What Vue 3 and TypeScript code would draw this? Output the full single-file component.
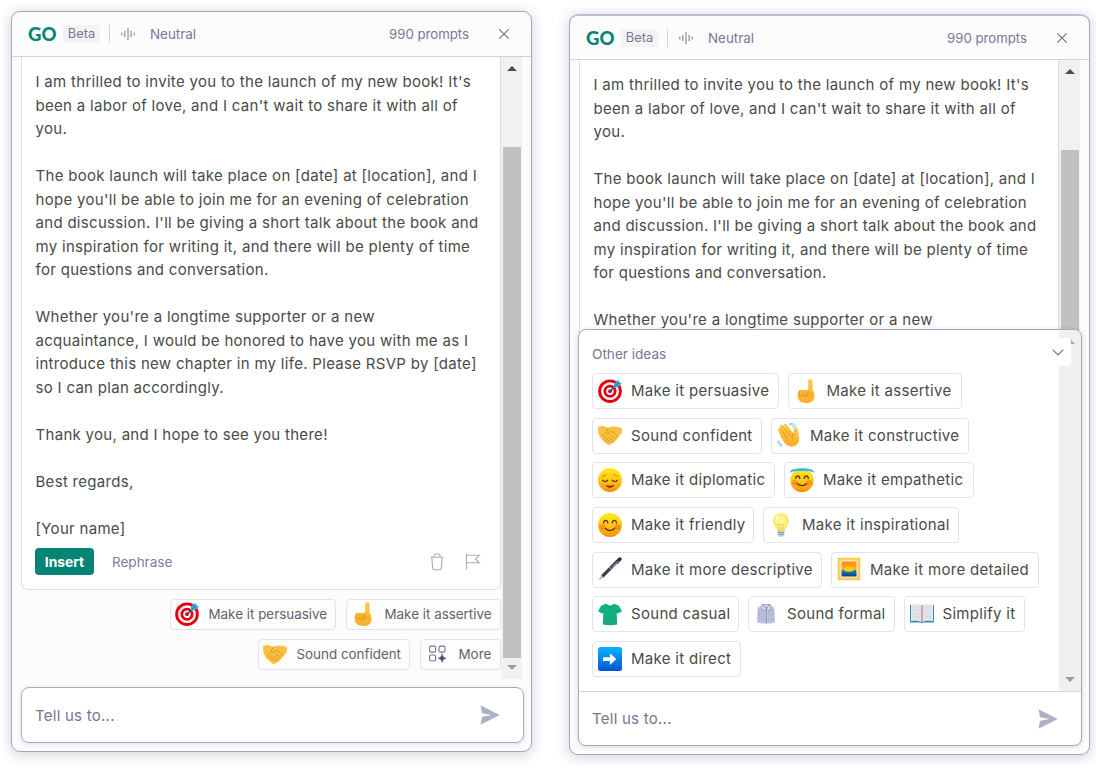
<script setup lang="ts">
interface Chip {
  icon: string
  label: string
  width: number
}

interface Panel {
  id: string
  ideasOpen: boolean
  lineCount: number
}

const panels: Panel[] = [
  { id: 'compose', ideasOpen: false, lineCount: 20 },
  { id: 'ideas', ideasOpen: true, lineCount: 11 },
]

const lines: string[] = [
  "I am thrilled to invite you to the launch of my new book! It's",
  "been a labor of love, and I can't wait to share it with all of",
  'you.',
  '',
  'The book launch will take place on [date] at [location], and I',
  "hope you'll be able to join me for an evening of celebration",
  "and discussion. I'll be giving a short talk about the book and",
  'my inspiration for writing it, and there will be plenty of time',
  'for questions and conversation.',
  '',
  "Whether you're a longtime supporter or a new",
  'acquaintance, I would be honored to have you with me as I',
  'introduce this new chapter in my life. Please RSVP by [date]',
  'so I can plan accordingly.',
  '',
  'Thank you, and I hope to see you there!',
  '',
  'Best regards,',
  '',
  '[Your name]',
]

const quickRows: Chip[][] = [
  [
    { icon: 'target', label: 'Make it persuasive', width: 166 },
    { icon: 'finger', label: 'Make it assertive', width: 155 },
  ],
  [
    { icon: 'handshake', label: 'Sound confident', width: 152 },
    { icon: 'more', label: 'More', width: 81 },
  ],
]

const ideaRows: Chip[][] = [
  [
    { icon: 'target', label: 'Make it persuasive', width: 186.5 },
    { icon: 'finger', label: 'Make it assertive', width: 174 },
  ],
  [
    { icon: 'handshake', label: 'Sound confident', width: 170 },
    { icon: 'wave', label: 'Make it constructive', width: 198 },
  ],
  [
    { icon: 'relieved', label: 'Make it diplomatic', width: 183 },
    { icon: 'halo', label: 'Make it empathetic', width: 190 },
  ],
  [
    { icon: 'smile', label: 'Make it friendly', width: 162 },
    { icon: 'bulb', label: 'Make it inspirational', width: 195.5 },
  ],
  [
    { icon: 'pen', label: 'Make it more descriptive', width: 230 },
    { icon: 'picture', label: 'Make it more detailed', width: 207.5 },
  ],
  [
    { icon: 'tshirt', label: 'Sound casual', width: 147 },
    { icon: 'shirt', label: 'Sound formal', width: 146.5 },
    { icon: 'book', label: 'Simplify it', width: 121 },
  ],
  [{ icon: 'arrow', label: 'Make it direct', width: 149 }],
]
</script>

<template>
  <main class="stage">
    <svg class="defs" width="0" height="0" aria-hidden="true">
      <defs>
        <linearGradient id="gFace" x1="0" y1="0" x2="0" y2="1">
          <stop offset="0" stop-color="#ffe91f" />
          <stop offset=".5" stop-color="#ffc914" />
          <stop offset="1" stop-color="#fb8a0a" />
        </linearGradient>
        <linearGradient id="gBlue" x1="0" y1="0" x2="0" y2="1">
          <stop offset="0" stop-color="#05b4fb" />
          <stop offset="1" stop-color="#0554cf" />
        </linearGradient>
        <linearGradient id="gSky" x1="0" y1="0" x2="0" y2="1">
          <stop offset="0" stop-color="#fb8a0c" />
          <stop offset=".58" stop-color="#fdb515" />
          <stop offset=".6" stop-color="#1488c4" />
          <stop offset="1" stop-color="#0a3b78" />
        </linearGradient>
        <linearGradient id="gHand" x1="0" y1="0" x2="0" y2="1">
          <stop offset="0" stop-color="#ffcb4c" />
          <stop offset="1" stop-color="#f7ae28" />
        </linearGradient>
        <linearGradient id="gTee" x1="0" y1="0" x2="0" y2="1">
          <stop offset="0" stop-color="#11b488" />
          <stop offset="1" stop-color="#16a77b" />
        </linearGradient>
        <radialGradient id="gBulb" cx=".5" cy=".45" r=".6">
          <stop offset="0" stop-color="#fff9a8" />
          <stop offset="1" stop-color="#fbe158" />
        </radialGradient>
      </defs>

      <symbol id="target" viewBox="0 0 24 24">
        <circle cx="12" cy="12.2" r="11.8" fill="#e60012" />
        <circle cx="12" cy="12.2" r="8.900" fill="#fff" />
        <circle cx="12" cy="12.2" r="6.500" fill="#e60012" />
        <circle cx="12" cy="12.2" r="3.700" fill="#fff" />
        <circle cx="12" cy="12.2" r="1.900" fill="#e60012" />
        <path d="M12 12.4 18 6.3" stroke="#1b5e8c" stroke-width="1.5" />
        <path d="M15.6 8.4 16 4.8 20.2.4 20.8 3.4 24 4.2 19.8 8.2 16.2 8.6Z" fill="#35a9e0" />
        <path d="M16.6 7.8 22 2.6" stroke="#1a6fa8" stroke-width=".9" />
      </symbol>

      <symbol id="finger" viewBox="-3 0 24 24">
        <path d="M11.2 12.2V2.1c0-2.5 4.4-2.5 4.4 0v9.2c1.6 1 1.9 3.2 1.9 5.6 0 4.400-3.200 7-8 7C4 23.900.6 21.300.6 16.700c0-2.600.2-4.900 2-5.300 1-.9 2.500-.9 3.500 0 1.300-1 3.400-.800 5.100.800Z" fill="url(#gHand)" />
        <path d="M2.600 11.600v4.200c.5 1.600 2.900 1.500 3.300 0v-4.200M6 15.500c.8 1.500 3.200 1.200 3.600-.3l.2-3.400M1.500 15.600c4 2.400 8.900 2 13-1.200M11.200 11v3.500c-2.200 1-3.600 2.200-3.200 4.600" fill="none" stroke="#e29a26" stroke-width=".9" stroke-linecap="round" />
      </symbol>

      <symbol id="handshake" viewBox="0 0 24 24">
        <path d="M.5 4.300 5 3.500l5.300 1.800 3.200-1.200 5.200.2 4.800 1-.4 5.300-2.600 2.300-2 3.300-1.700 1.300-1.200 1.900-2 .6-1.900 1.700-2.300-.6-3-2.700-2.300-2-1.500-2.500L1 11.100Z" fill="#fabf3f" stroke="#fabf3f" stroke-linejoin="round" />
        <path d="m10.200 5.300-2.400 4.400c1.500 1.500 3.500.7 4.500-1.200l2.200.1 5.300 4.800M13 12.200l4.200 3.500M10.900 14.300l4.100 3.400M9 16.200l3.300 3M4.700 12.900l1.900-1.600M6 15.600l2-1.800M8.100 17.800l1.400-1.600" fill="none" stroke="#d38e22" stroke-width=".8" stroke-linecap="round" />
      </symbol>

      <symbol id="wave" viewBox="0 0 24 24">
        <path d="M4 14.200 1 7.300C.3 5.200 2.800 4 4 5.900l2.500 4L2.900 4.100C2 2 4.500.9 5.800 2.600l4 6L6.900 2.700C6.200.6 8.700-.1 9.800 1.600l6.500 8.600.5-3.200c-.1-2.700 3.300-2.900 3.900-.5l1.400 8.200c.6 3.600-1.400 7.300-4.800 8.500-3.800 1.300-7.600-.2-10-3.600Z" fill="url(#gHand)" />
        <path d="m4 6 6 9M5.900 3l7.100 9.700M16.300 10.200c-1.500 1.800-1.600 4.200-.5 6" fill="none" stroke="#d9901c" stroke-width=".9" stroke-linecap="round" />
        <path d="M12.600 1.300c2.200.4 3.700 1.500 4.500 3.500M13.500.1c2.700.2 4.500 1.600 5.500 4M.5 18.700c.6 2.200 1.900 3.600 4 4.300M1.900 18.200c.4 1.600 1.300 2.700 2.800 3.300" fill="none" stroke="#5abce0" stroke-width=".9" stroke-linecap="round" />
      </symbol>

      <symbol id="relieved" viewBox="0 0 24 24">
        <circle cx="12" cy="12" r="12" fill="url(#gFace)" />
        <path d="M4.600 12.200c1.200 1.700 4.100 1.700 5.200 0M14.200 12.200c1.200 1.700 4.100 1.700 5.200 0" fill="none" stroke="#5a3305" stroke-width="1.200" stroke-linecap="round" />
        <path d="M7.700 17c2 1 6.600 1 8.600 0-1.200 3.700-7.400 3.700-8.600 0Z" fill="#5a3305" />
        <path d="M4.400 8.200c1.700-.1 3.200-.9 4.200-2.100M19.600 8.200c-1.700-.1-3.200-.9-4.200-2.100" fill="none" stroke="#b7740c" stroke-width=".9" stroke-linecap="round" />
      </symbol>

      <symbol id="smile" viewBox="0 0 24 24">
        <circle cx="12" cy="12" r="12" fill="url(#gFace)" />
        <circle cx="4.200" cy="14" r="3" fill="#f76a2a" opacity=".55" />
        <circle cx="19.800" cy="14" r="3" fill="#f76a2a" opacity=".55" />
        <path d="M5.500 9.800c.6-3.300 3.800-3.300 4.300 0M14.200 9.800c.6-3.300 3.800-3.300 4.300 0M7.200 15.200c2.200 3.100 7.400 3.100 9.600 0" fill="none" stroke="#5a3305" stroke-width="1.300" stroke-linecap="round" />
      </symbol>

      <symbol id="halo" viewBox="0 0 24 24">
        <circle cx="12" cy="12.600" r="11.700" fill="url(#gFace)" />
        <circle cx="4.600" cy="14.500" r="2.800" fill="#f76a2a" opacity=".5" />
        <circle cx="19.400" cy="14.500" r="2.800" fill="#f76a2a" opacity=".5" />
        <path d="M5.600 10.400c.6-3.200 3.700-3.200 4.200 0M14.200 10.400c.6-3.200 3.700-3.200 4.200 0M7.200 15.400c2.200 3 7.400 3 9.600 0" fill="none" stroke="#5a3305" stroke-width="1.300" stroke-linecap="round" />
        <path d="M.5 4.200C-.5-.4 24.500-.4 23.500 4.200 21.500 1.700 2.500 1.700.5 4.200Z" fill="#24b5e8" stroke="#24b5e8" stroke-width=".8" stroke-linejoin="round" />
      </symbol>

      <symbol id="bulb" viewBox="-4 0 24 24">
        <path d="M8 .2c4.700 0 7.900 3.400 7.900 7.500 0 4.300-3.600 6.300-4.200 10.200H4.300C3.700 14 .1 12 .1 7.700.1 3.600 3.300.2 8 .2Z" fill="url(#gBulb)" />
        <path d="M6.700 17.500 5.400 11.100l1.600.8 1-.8 1 .8 1.600-.8-1.300 6.400" fill="none" stroke="#efc545" stroke-width=".7" />
        <path d="M4.600 17.700h6.800v3.700l-1.700 2.300H6.300l-1.700-2.300Z" fill="#bfcbd0" />
        <path d="M4.700 19.500h6.600M5 21.500h6" stroke="#82959d" stroke-width=".8" />
        <path d="M3 7.300c.2-2.200 1.200-3.700 3-4.400" stroke="#fffde0" stroke-width="1.300" fill="none" stroke-linecap="round" />
      </symbol>

      <symbol id="pen" viewBox="0 0 24 24">
        <path d="M.2 23.800 3.500 17.900l2.600 2.600Z" fill="#b8bdc4" />
        <path d="M3.300 18.100 16.500 4.700l2.400 2.400L5.600 20.400Z" fill="#3b4250" />
        <path d="M16.500 4.700 20.900.5c1.800-1.200 3.600.9 2.600 2.400l-4.200 4.300Z" fill="#2c323e" />
        <path d="m11 10.100 2.600 2.600M20.500 4 14 10.500" stroke="#cfd4da" stroke-width=".9" />
      </symbol>

      <symbol id="picture" viewBox="0 0 24 24">
        <path d="M.8.8h22.400v22.400H.8Z" fill="#f8bd3d" />
        <path d="M2.200 2.200h19.600v19.600H2.200Z" fill="none" stroke="#ffdc70" />
        <path d="M3.400 3.400h17.200v17.200H3.400Z" fill="#fff8e7" />
        <path d="M4.500 4.500h15v15h-15Z" fill="url(#gSky)" />
        <path d="M7 13.300a5 4 0 0 1 10 0c-2 2-8 2-10 0Z" fill="#ffc81c" />
      </symbol>

      <symbol id="tshirt" viewBox="0 0 24 24">
        <path d="m7.700 1.800 1.400.8c1.500 1.200 4.300 1.200 5.800 0l1.400-.8 4.600 1.900L24 9.200l-4.300 2.500-1-1.400.5 12.300c-4.500.8-9.900.8-14.400 0l.5-12.300-1 1.400L0 9.200l3.100-5.500Z" fill="url(#gTee)" />
        <path d="M7.700 1.900c1.200 3.500 7.400 3.500 8.600 0M5.300 10.300V8M18.700 10.300V8" fill="none" stroke="#08906a" stroke-width=".8" />
      </symbol>

      <symbol id="shirt" viewBox="0 0 24 24">
        <path d="M8 3.200 3.800 5.500C3.300 9 3 14 3 20.500l3.300.6.300-3.600v4h11.800v-4l.3 3.600 2.300-.5C21 14 20.700 9 20.200 5.500L16 3.200Z" fill="#c3c9e0" />
        <path d="M5 6v14.500M7.200 6v15M9.500 8v13M15 8v13M17 6v15M19 7v13" stroke="#9ca5c6" stroke-width=".7" />
        <path d="M12.200 7.500v14" stroke="#7c87ae" stroke-width=".9" />
        <path d="m8.300 2.500 3.900 4.300-3 2-2.100-4.900ZM16 2.500l-3.800 4.300 3 2 2.100-4.900ZM8.300 2.500H16l-3.800 3Z" fill="#dde1ef" stroke="#7f89b0" stroke-width=".7" />
      </symbol>

      <symbol id="book" viewBox="0 0 24 24">
        <path d="M0 3h24v17.500H13.500l-1.500 1-1.500-1H0Z" fill="#3b87b8" />
        <path d="M1 2.900c4.300-.9 8.200-.8 11 .6 2.800-1.400 6.700-1.500 11-.6v16.300c-4.500-.7-8.500-.4-11 1.200-2.500-1.600-6.500-1.900-11-1.200Z" fill="#e0e5ea" />
        <path d="M3 5.700c2.600-.3 5-.1 7 .7M3 8.700c2.600-.3 5-.1 7 .7M3 11.700c2.600-.3 5-.1 7 .7M3 14.700c2.600-.3 5-.1 7 .7M14 6.400c2-.8 4.400-1 7-.7M14 9.400c2-.8 4.400-1 7-.7M14 12.400c2-.8 4.400-1 7-.7M14 15.400c2-.8 4.400-1 7-.7" fill="none" stroke="#c8d0d7" stroke-width=".6" />
        <path d="M12 3.500v16.700" stroke="#c0565c" stroke-width=".9" />
      </symbol>

      <symbol id="arrow" viewBox="0 0 24 24">
        <rect width="24" height="24" rx="2.500" fill="url(#gBlue)" />
        <path d="M5 10.300h6.900V6.200l6.400 5.900-6.400 5.900v-4.100H5Z" fill="#fff" />
      </symbol>

      <symbol id="more" viewBox="0 0 24 24">
        <g fill="none" stroke="#70758f" stroke-width="1.100">
          <rect x="4.600" y="4.100" width="6" height="6" rx="1.400" />
          <rect x="14" y="4.100" width="6" height="6" rx="1.400" />
          <rect x="4.600" y="13" width="6" height="6" rx="1.400" />
        </g>
        <path d="M17.100 11.900c.8 2.800 1.300 3.400 4.100 4.300-2.800.9-3.300 1.500-4.100 4.300-.8-2.800-1.300-3.400-4.100-4.300 2.800-.9 3.300-1.500 4.100-4.300Z" fill="#4b5070" stroke="#4b5070" stroke-width=".5" />
      </symbol>
    </svg>

    <section v-for="panel in panels" :key="panel.id" class="shot" :class="panel.id">
      <article class="panel">
        <header class="head">
          <span class="logo">GO</span>
          <span class="beta">Beta</span>
          <span class="rule"></span>
          <svg class="tone" viewBox="0 0 14 14">
            <path d="M.8 6v2M3.800 4.300v5.400M7 1.300v11.400M10.100 4.300v5.400M13.200 6v2" fill="none" stroke="#7c819b" stroke-width="1.100" stroke-linecap="round" />
          </svg>
          <span class="neutral">Neutral</span>
          <span class="count">990 prompts</span>
          <svg class="close" viewBox="0 0 12 12">
            <path d="m1.300 1.300 9.400 9.400m0-9.400-9.400 9.400" stroke="#6b7090" stroke-width="1.150" />
          </svg>
        </header>

        <div class="body">
          <div class="feed">
            <div class="message">
              <p v-for="(line, i) in lines.slice(0, panel.lineCount)" :key="i" class="line">{{ line }}</p>
              <div v-if="!panel.ideasOpen" class="actions">
                <button class="insert">Insert</button>
                <span class="rephrase">Rephrase</span>
                <svg class="trash" viewBox="0 0 14 18">
                  <path d="M.7 4.200h12.600M4 4V2.600C4 1.500 4.700 1 5.600 1h2.800c.9 0 1.600.5 1.600 1.600V4M1.800 4.400l.9 10.800c.1 1 .7 1.500 1.600 1.500h5.400c.9 0 1.500-.5 1.600-1.500l.9-10.800" fill="none" stroke="#a6abc2" stroke-width="1.100" />
                </svg>
                <svg class="flag" viewBox="0 0 16 17">
                  <path d="M1.500.8v15.700M1.500 2.300h12.800l-3.800 3.700 3.800 3.800H1.500" fill="none" stroke="#a6abc2" stroke-width="1.100" />
                </svg>
              </div>
            </div>
            <div v-if="!panel.ideasOpen" class="quick">
              <div v-for="(row, r) in quickRows" :key="r" class="quick-row">
                <span v-for="chip in row" :key="chip.label" class="chip small" :style="{ width: chip.width + 'px' }">
                  <svg class="emoji"><use :href="'#' + chip.icon" /></svg>{{ chip.label }}
                </span>
              </div>
            </div>
          </div>
          <div class="scrollbar">
            <svg class="up" viewBox="0 0 10 5"><path d="M0 5 5 0l5 5Z" fill="#4d4d4d" /></svg>
            <div class="thumb"></div>
            <svg class="down" viewBox="0 0 10 5"><path d="M0 0h10L5 5Z" fill="#9c9c9c" /></svg>
          </div>
        </div>

        <footer v-if="!panel.ideasOpen" class="prompt boxed">
          <span>Tell us to...</span>
          <svg class="send" viewBox="0 0 20 20"><path d="M.5.300 19.700 9.900.5 19.700 2 11.700 11.500 10 2 8.300Z" fill="#adb1c5" /></svg>
        </footer>

        <div v-else class="drawer">
          <div class="ideas">
            <div class="list">
              <div class="title">Other ideas</div>
              <div v-for="(row, r) in ideaRows" :key="r" class="idea-row">
                <span v-for="chip in row" :key="chip.label" class="chip" :style="{ width: chip.width + 'px' }">
                  <svg class="emoji"><use :href="'#' + chip.icon" /></svg>{{ chip.label }}
                </span>
              </div>
            </div>
            <div class="track">
              <svg class="up" viewBox="0 0 10 5"><path d="M0 5 5 0l5 5Z" fill="#a3a3a3" /></svg>
              <svg class="down" viewBox="0 0 10 5"><path d="M0 0h10L5 5Z" fill="#9c9c9c" /></svg>
            </div>
            <div class="collapse">
              <svg viewBox="0 0 12 7"><path d="m.7.700 5.300 5.300L11.300.7" fill="none" stroke="#6b7090" stroke-width="1.200" /></svg>
            </div>
          </div>
          <footer class="prompt">
            <span>Tell us to...</span>
            <svg class="send" viewBox="0 0 20 20"><path d="M.5.300 19.700 9.900.5 19.700 2 11.700 11.500 10 2 8.300Z" fill="#adb1c5" /></svg>
          </footer>
        </div>
      </article>
    </section>
  </main>
</template>

<style>
body {
  background: #fff;
}
</style>

<style scoped>
* {
  box-sizing: border-box;
}
.stage {
  display: flex;
  gap: 13px;
  width: 1096px;
  height: 771px;
  padding-left: 2px;
  overflow: hidden;
  font-family: Inter, 'Liberation Sans', sans-serif;
  color: #4a4a4a;
}
.defs {
  position: absolute;
}
.shot {
  flex: none;
  overflow: hidden;
}
.compose {
  width: 542px;
  height: 763px;
  margin-top: 3px;
  padding: 8px 0 0 9px;
}
.ideas.shot {
  width: 539px;
  height: 758px;
  margin-top: 7px;
  padding: 7px 0 0 12px;
}
.panel {
  position: relative;
  display: flex;
  flex-direction: column;
  width: 521px;
  height: 741px;
  border: 1px solid #a3a8bf;
  border-radius: 9px;
  background: #fcfcfc;
  box-shadow: 0 2px 14px rgba(60, 62, 110, 0.25);
}
.ideas .panel {
  border-top: 2px solid #bcbfd2;
}
.head {
  display: flex;
  flex: none;
  align-items: center;
  height: 45px;
  padding-left: 16px;
  border-bottom: 1px solid #d0d2e0;
  color: #757a94;
  font-size: 13.4px;
}
.ideas .head {
  height: 44px;
}
.logo {
  width: 35px;
  font: 900 18.5px/18px Lato, sans-serif;
  color: #048474;
}
.beta {
  width: 37px;
  height: 18px;
  border-radius: 3px;
  background: #f3f3f6;
  font-size: 12.8px;
  line-height: 18px;
  text-align: center;
}
.rule {
  width: 1px;
  height: 18px;
  margin-left: 9px;
  background: #d2d4e0;
}
.tone {
  width: 14px;
  height: 14px;
  margin-left: 11px;
}
.neutral {
  margin-left: 15px;
}
.count {
  margin-left: auto;
  font-size: 13.2px;
}
.close {
  width: 12px;
  height: 12px;
  margin: 0 21px 0 29px;
}
.body {
  display: flex;
  flex: none;
  height: 622px;
  overflow: hidden;
}
.ideas .body {
  height: 680px;
}
.feed {
  width: 489px;
  padding-left: 9px;
}
.message {
  width: 480px;
  height: 533px;
  padding: 13px 0 0 13.5px;
  border: 1px solid #dcdde8;
  border-top: 0;
  border-radius: 0 0 7px 7px;
  background: #fff;
}
.ideas .message {
  height: 680px;
}
.line {
  height: 23.53px;
  margin: 0;
  font-size: 15px;
  line-height: 23.53px;
  letter-spacing: 0.3px;
  white-space: pre;
}
.actions {
  display: flex;
  align-items: center;
  height: 27px;
  margin-top: 8px;
  margin-left: -0.5px;
}
.insert {
  width: 59px;
  height: 27px;
  padding: 0;
  border: 0;
  border-radius: 4px;
  background: #048474;
  color: #fff;
  font: 700 13.8px Inter, sans-serif;
}
.rephrase {
  margin-left: 18px;
  color: #7a7f98;
  font-size: 13.5px;
}
.trash {
  width: 14px;
  height: 18px;
  margin-left: auto;
}
.flag {
  width: 16px;
  height: 17px;
  margin: 0 19px 0 21px;
}
.quick {
  display: flex;
  flex-direction: column;
  gap: 9px;
  width: 480px;
  padding-top: 9px;
}
.quick-row {
  display: flex;
  justify-content: flex-end;
  gap: 10px;
}
.chip {
  display: flex;
  flex: none;
  align-items: center;
  height: 36px;
  padding: 0 0 1px 5px;
  border: 1px solid #e2e3eb;
  border-radius: 4px;
  background: #fff;
  font-size: 15px;
  letter-spacing: 0.3px;
  white-space: nowrap;
}
.chip.small {
  height: 31px;
  padding-left: 4px;
  color: #606272;
  background: #fdfdfd;
  font-size: 13.4px;
  letter-spacing: 0;
}
.emoji {
  width: 24px;
  height: 24px;
  margin-right: 9px;
}
.small .emoji {
  margin-right: 9.5px;
}
.scrollbar {
  display: flex;
  flex-direction: column;
  align-items: center;
  width: 21px;
  background: #f1f1f1;
}
.up,
.down {
  flex: none;
  width: 10px;
  height: 5px;
}
.scrollbar .up {
  margin-top: 9px;
}
.thumb {
  width: 18px;
  height: 511px;
  margin: 76px 0 7px;
  background: #c1c1c1;
}
.prompt {
  display: flex;
  align-items: center;
  justify-content: space-between;
  height: 56px;
  padding: 0 23px 0 13px;
  color: #73788f;
  font-size: 15px;
  letter-spacing: 0.25px;
}
.drawer .prompt {
  height: 53px;
}
.boxed {
  width: 503px;
  margin: 8px 0 0 9px;
  border: 1px solid #a9adc2;
  border-radius: 8px;
  background: #fff;
  box-shadow: 0 1px 5px rgba(60, 62, 110, 0.16);
}
.send {
  width: 20px;
  height: 20px;
}
.drawer {
  position: absolute;
  top: 313px;
  left: 8px;
  width: 504px;
  height: 417px;
  border: 1px solid #a5aac0;
  border-radius: 8px;
  background: #fff;
  box-shadow: 0 1px 5px rgba(60, 62, 110, 0.2);
  overflow: hidden;
}
.drawer .ideas {
  position: relative;
  display: flex;
  height: 362px;
  border-bottom: 1px solid #d3d5e1;
}
.list {
  flex: 1;
  padding: 13.5px 0 0 13px;
}
.title {
  height: 20px;
  margin-bottom: 9.5px;
  color: #73788f;
  font-size: 13.6px;
  line-height: 20px;
}
.idea-row {
  display: flex;
  gap: 9px;
  height: 44.7px;
}
.track {
  display: flex;
  flex-direction: column;
  align-items: center;
  justify-content: space-between;
  width: 22px;
  padding: 9px 0;
  background: #f0f0f0;
}
.collapse {
  position: absolute;
  top: 8px;
  right: 10px;
  display: flex;
  align-items: center;
  justify-content: center;
  width: 26px;
  height: 28px;
  border-radius: 4px;
  background: #fff;
}
.collapse svg {
  width: 12px;
  height: 7px;
}
</style>
